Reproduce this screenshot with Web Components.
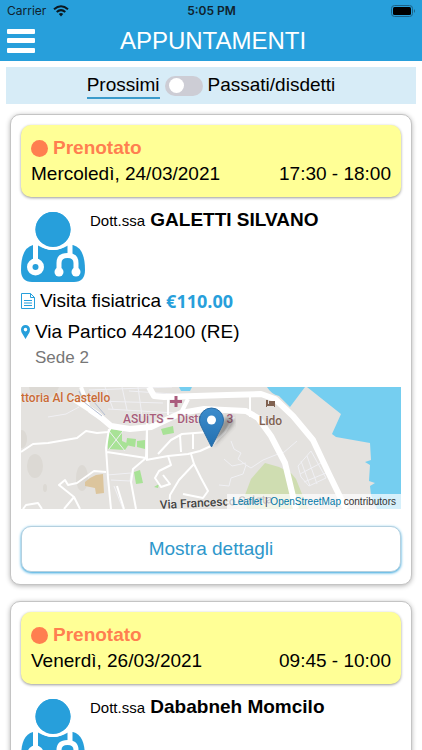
<!DOCTYPE html>
<html lang="it">
<head>
<meta charset="utf-8">
<meta name="viewport" content="width=device-width, initial-scale=1">
<title>Appuntamenti</title>
<style>
    html {
        --primary-color: #279fdb;
        --booked-color: #ff7f50;
        --booked-background: #ffff96;
        --body-size: 19px;
    }
    body {
        margin: 0;
        background: #fff;
        color: #000;
        font-family: "Liberation Sans", Arial, sans-serif;
        font-size: var(--body-size);
        line-height: 26px;
        overflow-x: hidden;
    }
    main {
        display: flex;
        flex-direction: column;
        gap: 16px;
        padding: 10px;
    }
</style>
</head>
<body>
<app-header heading="APPUNTAMENTI"></app-header>
<period-switch></period-switch>
<main>
    <appointment-card day="Mercoledì, 24/03/2021" time="17:30 - 18:00">
        <doctor-row slot="doctor" prefix="Dott.ssa">GALETTI SILVANO</doctor-row>
        <visit-info price="€110.00" address="Via Partico 442100 (RE)" place="Sede 2">Visita fisiatrica</visit-info>
        <place-map></place-map>
    </appointment-card>
    <appointment-card day="Venerdì, 26/03/2021" time="09:45 - 10:00">
        <doctor-row slot="doctor" prefix="Dott.ssa">Dababneh Momcilo</doctor-row>
    </appointment-card>
</main>

<script>
class StatusBar extends HTMLElement {
    constructor () {
        super();
        this.attachShadow({mode: 'open'}).innerHTML = this.template();
    }

    template () {
        return `
            <style>
                :host {
                    display: grid;
                    grid-template-columns: 1fr auto 1fr;
                    align-items: center;
                    height: 22px;
                    padding: 0 6px 0 7px;
                    color: #10222d;
                    font: 11px/22px Inter, sans-serif;
                }
                .carrier { display: flex; align-items: center; gap: 7px; font-size: 12px; }
                .clock { font-weight: 600; font-size: 12px; }
                .battery { justify-self: end; }
                svg { display: block; }
            </style>
            <span class="carrier">Carrier
                <svg width="16" height="12" viewBox="0 0 16 12" fill="none" stroke="#0b1820" stroke-width="2">
                    <path d="M1 4.3Q8-1.8 15 4.3M3.7 7Q8 3.2 12.3 7"/>
                    <path d="M5.8 9Q8 7.2 10.2 9L8 11.4Z" fill="#0b1820" stroke="none"/>
                </svg>
            </span>
            <span class="clock">5:05 PM</span>
            <svg class="battery" width="25" height="12" viewBox="0 0 25 12">
                <rect x=".5" y=".5" width="21" height="11" rx="3" fill="none" stroke="#1c6287"/>
                <rect x="2" y="2" width="18" height="8" rx="1.5"/>
                <path d="M23 4Q25 6 23 8Z" fill="#1c6287"/>
            </svg>
        `;
    }
}

customElements.define('status-bar', StatusBar);


class AppHeader extends HTMLElement {
    constructor () {
        super();
        this.attachShadow({mode: 'open'}).innerHTML = this.template();
    }

    get heading () {
        return this.getAttribute('heading') || '';
    }

    template () {
        return `
            <style>
                :host {
                    display: block;
                    padding-bottom: 2px;
                    background: var(--primary-color);
                    color: #fff;
                }
                .bar {
                    display: grid;
                    grid-template-columns: 36px 1fr 36px;
                    align-items: center;
                    height: 37px;
                    padding: 0 0 0 4px;
                }
                button {
                    padding: 0 3px;
                    border: 0;
                    background: none;
                }
                h1 {
                    margin: 0;
                    font-size: 24px;
                    font-weight: 400;
                    line-height: 36px;
                    text-align: center;
                }
                svg { display: block; }
            </style>
            <status-bar></status-bar>
            <div class="bar">
                <button type="button" aria-label="Menu">
                    <svg width="28" height="24" viewBox="0 0 28 24" fill="#fff">
                        <rect width="28" height="5" rx="1"/>
                        <rect y="9" width="28" height="5" rx="1"/>
                        <rect y="19" width="28" height="5" rx="1"/>
                    </svg>
                </button>
                <h1>${this.heading}</h1>
            </div>
        `;
    }
}

customElements.define('app-header', AppHeader);


class PeriodSwitch extends HTMLElement {
    constructor () {
        super();
        this.attachShadow({mode: 'open'}).innerHTML = this.template();
    }

    template () {
        return `
            <style>
                :host {
                    display: flex;
                    justify-content: center;
                    align-items: center;
                    gap: 5px;
                    height: 37px;
                    margin: 6px 6px 0;
                    background: #d7ecf7;
                }
                label {
                    border-bottom: 2px solid transparent;
                    line-height: 25px;
                }
                label.current { border-color: #3a9bcb; }
                input {
                    display: flex;
                    align-items: center;
                    appearance: none;
                    width: 38px;
                    height: 20px;
                    margin: 0;
                    padding: 0 4px;
                    box-sizing: border-box;
                    border-radius: 10px;
                    background: #cdcdd5;
                }
                input::before {
                    content: "";
                    width: 15px;
                    height: 15px;
                    border-radius: 50%;
                    background: #fff;
                }
                input:checked { justify-content: flex-end; }
            </style>
            <label class="current" for="past">Prossimi</label>
            <input id="past" type="checkbox" role="switch">
            <label for="past">Passati/disdetti</label>
        `;
    }
}

customElements.define('period-switch', PeriodSwitch);


class DoctorRow extends HTMLElement {
    constructor () {
        super();
        this.attachShadow({mode: 'open'}).innerHTML = this.template();
    }

    template () {
        return `
            <style>
                :host {
                    display: flex;
                    gap: 5px;
                    padding: 15px 0 6px;
                }
                svg { display: block; flex: none; }
                p { margin: 0; line-height: 16px; }
                small { font-size: 15px; }
            </style>
            <svg width="64" height="70" viewBox="0 0 64 70">
                <path fill="var(--primary-color)" d="M12 33H52Q64 36 64 58Q64 70 53 70H11Q0 70 0 58Q0 36 12 33Z"/>
                <circle cx="32" cy="17.5" r="19" fill="var(--primary-color)" stroke="#fff" stroke-width="3"/>
                <path fill="#fff" d="M14 32H50L46 34Q32 42 18 34Z"/>
                <circle cx="32" cy="17.5" r="17.5" fill="var(--primary-color)"/>
                <g fill="none" stroke="#fff" stroke-width="5">
                    <path d="M14.500 31V48M49 31V44" />
                    <path d="M38 59V51Q38 43.500 46.500 43.500T55 51V59"/>
                </g>
                <g fill="#fff">
                    <circle cx="14.500" cy="55" r="8.500"/>
                    <circle cx="38" cy="60" r="4.500"/>
                    <circle cx="55" cy="60" r="4.500"/>
                </g>
                <circle cx="14.500" cy="55" r="3" fill="var(--primary-color)"/>
            </svg>
            <p><small>${this.getAttribute('prefix')}</small> <b><slot></slot></b></p>
        `;
    }
}

customElements.define('doctor-row', DoctorRow);


class VisitInfo extends HTMLElement {
    constructor () {
        super();
        this.attachShadow({mode: 'open'}).innerHTML = this.template();
    }

    template () {
        return `
            <style>
                :host { display: block; }
                p {
                    display: flex;
                    align-items: center;
                    gap: 5px;
                    margin: 0 0 5px;
                }
                p.address { margin: 0; }
                svg { display: block; flex: none; }
                b {
                    color: var(--primary-color);
                    font-family: "Open Sans", sans-serif;
                    font-size: 18px;
                }
                .place {
                    padding-left: 14px;
                    color: #777;
                    font-size: 17px;
                }
            </style>
            <p>
                <svg width="14" height="16" viewBox="0 0 14 16" fill="none" stroke="var(--primary-color)">
                    <path d="M.5.500H9.500L13.500 4.500V15.500H.5ZM9.500.500V4.500H13.500M3 7.500H11M3 10H11M3 12.500H11"/>
                </svg>
                <slot></slot>
                <b>${this.getAttribute('price')}</b>
            </p>
            <p class="address">
                <svg width="9" height="14" viewBox="0 0 9 14">
                    <path fill="var(--primary-color)" fill-rule="evenodd" d="M4.500 0A4.500 4.500 0 0 0 0 4.500Q0 6.500 1.200 8.500L4.500 14L7.800 8.500Q9 6.500 9 4.500A4.500 4.500 0 0 0 4.500 0ZM4.500 2.800A1.800 1.800 0 1 1 4.500 6.400A1.800 1.800 0 1 1 4.500 2.800Z"/>
                </svg>
                ${this.getAttribute('address')}
            </p>
            <div class="place">${this.getAttribute('place')}</div>
        `;
    }
}

customElements.define('visit-info', VisitInfo);


class PlaceMap extends HTMLElement {
    constructor () {
        super();
        this.attachShadow({mode: 'open'}).innerHTML = this.template();
    }

    template () {
        return `
            <style>
                :host {
                    display: block;
                    position: relative;
                    margin-top: 16px;
                }
                svg { display: block; width: 100%; height: 122px; }
                text {
                    font-family: Roboto, sans-serif;
                    font-weight: 500;
                    font-size: 12px;
                    paint-order: stroke;
                    stroke: #eeecea;
                    stroke-width: 1px;
                }
                footer {
                    position: absolute;
                    right: 0;
                    bottom: 0;
                    padding: 0 5px;
                    background: rgba(255, 255, 255, .7);
                    color: #333;
                    font-size: 10px;
                    line-height: 15px;
                }
                a { color: #0078a8; text-decoration: none; }
            </style>
            <svg viewBox="0 0 380 122" preserveAspectRatio="xMidYMid slice">
                <defs>
                    <linearGradient id="pin" x2="0" y2="1">
                        <stop stop-color="#3c8ccc"/>
                        <stop offset="1" stop-color="#2370b0"/>
                    </linearGradient>
                    <filter id="soft"><feGaussianBlur stdDeviation="2"/></filter>
                </defs>
                <rect width="380" height="122" fill="#e4e2df"/>
                <g fill="#dcd9d4">
                    <ellipse cx="14" cy="79" rx="8" ry="12"/>
                    <ellipse cx="61" cy="91" rx="6" ry="13"/>
                    <ellipse cx="1" cy="52" rx="5" ry="9"/>
                    <ellipse cx="24" cy="101" rx="2" ry="4"/>
                    <path d="M8 0H38Q34 12 22 13Q10 13 8 0Z"/>
                </g>
                <!-- sea and harbour -->
                <path fill="#75cef0" d="M246 0H284L269 20L258 9Q250 7 246 0ZM286 0H380V122H356L350 108L349 99L354 96L348 94L349 78L344 75L350 73L349 56L315 50L311 47L320 27Z"/>
                <path fill="#75cef0" d="M158 0H171L169 4L160 4Z"/>
                <!-- parks and buildings -->
                <g fill="#a8e296">
                    <path d="M90 42L101 44V54L108 57L104 63L87 62L86 50ZM106 51L115 52L114 60L105 58ZM116 54L124 53V62L116 60Z"/>
                    <path d="M113 85L119 83L122 96L115 97ZM140 42L152 39L153 46L142 48ZM133 100L138 97L137 101Z"/>
                </g>
                <path fill="#cfddb1" d="M230 92L244 76L258 80L270 86L275 92L287 122H226L224 108Z"/>
                <path fill="#dcc59d" d="M69 91L75 88L82 87L83 106L75 107L74 101L64 99V95Z"/>
                <!-- minor streets -->
                <g fill="none" stroke="#f0f0f4" stroke-width="1">
                    <path d="M84 0L92 22M101 0L106 23M117 0L121 29M75 14L142 16M87 22L154 26M108 4L153 7M68 3L151 0M27 30L45 27L58 20M88 44L104 64M102 44L88 62"/>
                    <path d="M86 88L110 86L109 94L90 93M93 99L102 122"/>
                    <path d="M210 54L213 62L220 66L217 72L225 78L222 87L210 91L208 99L198 98M225 78L230 81L242 73L262 65M203 72L211 79L225 76M262 66L276 54M277 79L290 64L305 91L288 99L280 90ZM280 74L289 99M286 69L296 97M279 87L300 76M283 95L305 86"/>
                </g>
                <!-- streets -->
                <g fill="none" stroke="#fff" stroke-width="2" stroke-linejoin="round">
                    <path d="M0 65L12 57L27 56L56 51L65 44L76 46L87 45L90 41"/>
                    <path d="M88 42L85 61L87 91L90 122M86 65L125 71L126 40M125 71L112 82L110 95L115 122"/>
                    <path d="M85 85L73 84L56 96L47 98L44 93L38 98L53 110L43 122M53 110L59 122M2 122L5 118L17 116L21 122M96 99L103 122"/>
                    <path d="M125 73L147 69L167 67L179 64L190 59L204 45L213 30M126 73V29M137 67L150 53L161 47L187 45M159 48L160 65M172 46V62"/>
                    <path d="M147 69L150 78L138 84L134 91L140 100L149 97L142 88M170 67L173 77L158 93L149 108L148 122M173 77L180 91L187 104L182 111L162 107M229 8V30M147 10V28"/>
                </g>
                <g fill="none" stroke="#fff" stroke-linejoin="round">
                    <path d="M53 12L76 27L90 39L109 42L130 40L160 26L183 22L225 24L237 31L250 49L264 76L275 122" stroke-width="6"/>
                    <path d="M60 0L69 24L85 35" stroke-width="4"/>
                    <path d="M160 26L167 12" stroke-width="4"/>
                    <path d="M128 0L133 9L143 10L206 8L240 7L254 12L272 29L292 53L308 87L325 122" stroke-width="6"/>
                </g>
                <path fill="none" stroke="#b3bdd1" stroke-width="1" d="M58 4L63 15L81 29M73 15L84 28"/>
                <text x="0" y="15" fill="#c96b36">ttoria Al Castello</text>
                <text x="102" y="36" fill="#a75d7b">ASUiTS – Distretto 3</text>
                <path fill="#aa5c7d" d="M153.500 9H156.500V13H161V16H156.500V20H153.500V16H149V13H153.500Z"/>
                <path fill="#806251" d="M245 13H247V17H254V20H253V19H246V20H245ZM248 14H254V17H248Z"/>
                <text x="238" y="38" fill="#806251">Lido</text>
                <text x="139" y="122" fill="#444" transform="rotate(-3 139 122)">Via Francesco Salata</text>
                <path d="M192 59L207 43Q216 35 211 30Q203 28 199 38Z" fill="#333" opacity=".45" filter="url(#soft)"/>
                <path d="M190.500 60L181 41Q178.500 37 178.500 33A12 12 0 0 1 202.500 33Q202.500 37 200 41Z" fill="url(#pin)" stroke="#2b6da5"/>
                <circle cx="190.500" cy="33" r="4.500" fill="#fff"/>
            </svg>
            <footer><a href="#leaflet">Leaflet</a> | <a href="#osm">OpenStreetMap</a> contributors</footer>
        `;
    }
}

customElements.define('place-map', PlaceMap);


class AppointmentCard extends HTMLElement {
    constructor () {
        super();
        this.attachShadow({mode: 'open'}).innerHTML = this.template();
    }

    // only cards that carry a visit have details to open
    get hasDetails () {
        return this.querySelector('visit-info') !== null;
    }

    template () {
        return `
            <style>
                :host {
                    display: block;
                    padding: 10px 10px 12px;
                    border: 1px solid #c4c4c4;
                    border-radius: 10px;
                    background: #fff;
                    box-shadow: 0 1px 5px rgba(0, 0, 0, .3);
                }
                header {
                    padding: 10px;
                    border-radius: 10px;
                    background: var(--booked-background);
                    box-shadow: 0 1px 3px rgba(0, 0, 0, .4);
                }
                .status {
                    display: flex;
                    align-items: center;
                    gap: 5px;
                    color: var(--booked-color);
                    font-weight: 700;
                }
                .status::before {
                    content: "";
                    width: 17px;
                    height: 17px;
                    border-radius: 50%;
                    background: currentColor;
                }
                .when { display: flex; justify-content: space-between; }
                button {
                    display: block;
                    width: 100%;
                    height: 46px;
                    margin-top: 17px;
                    border: 1px solid #b4d0df;
                    border-radius: 10px;
                    background: #fff;
                    box-shadow: 0 1px 3px var(--primary-color);
                    color: #2e97cb;
                    font: inherit;
                }
            </style>
            <header>
                <div class="status">Prenotato</div>
                <div class="when"><span>${this.getAttribute('day')}</span><time>${this.getAttribute('time')}</time></div>
            </header>
            <slot name="doctor"></slot>
            <slot></slot>
            ${this.hasDetails ? '<button type="button">Mostra dettagli</button>' : ''}
        `;
    }
}

customElements.define('appointment-card', AppointmentCard);
</script>
</body>
</html>
